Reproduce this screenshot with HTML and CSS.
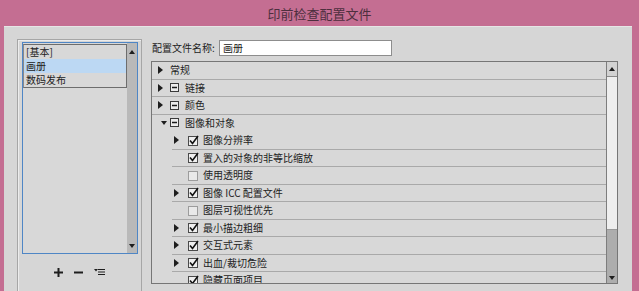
FILE: index.html
```html
<!DOCTYPE html>
<html>
<head>
    <title>印前检查配置文件</title>
    <link rel="stylesheet" href="styles.css">
</head>
<body>
    <div class="titlebar">印前检查配置文件</div>
    <div class="dialog">
        <div class="profiles">
            <div class="listbox">
                <div class="items">
                    <div class="item-list">
                        <div class="item">[基本]</div>
                        <div class="item selected">画册</div>
                        <div class="item">数码发布</div>
                    </div>
                </div>
                <div class="list-scroll">
                    <span class="tri-up"></span>
                    <span class="tri-down"></span>
                </div>
            </div>
            <div class="list-tools">
                <svg class="tool" width="9" height="9" viewBox="0 0 9 9"><path d="M4.5 0V9M0 4.5H9" stroke="#1e1e1e" stroke-width="2"/></svg>
                <svg class="tool" width="9" height="9" viewBox="0 0 9 9"><path d="M0 4.5H9" stroke="#1e1e1e" stroke-width="2"/></svg>
                <svg class="tool" width="11" height="8" viewBox="0 0 11 8"><path d="M0 1H4L2 3.5Z" fill="#1e1e1e"/><path d="M4 1.5H11M4 4H11M4 6.5H11" stroke="#1e1e1e" stroke-width="1.2"/></svg>
            </div>
        </div>

        <div class="main">
            <div class="name-row">
                <label class="name-label">配置文件名称:</label>
                <div class="name-input">画册</div>
            </div>
            <div class="tree">
                <div class="rows">
                    <div class="row">
                        <span class="tw"><span class="arrow-r"></span></span>
                        <span class="label">常规</span>
                    </div>
                    <div class="row">
                        <span class="tw"><span class="arrow-r"></span></span>
                        <svg class="minus" width="9" height="9" viewBox="0 0 9 9"><rect x="0.5" y="0.5" width="8" height="8" fill="#ececec" stroke="#3a3a3a"/><path d="M2 4.5H7" stroke="#1a1a1a" stroke-width="1.5"/></svg>
                        <span class="label">链接</span>
                    </div>
                    <div class="row">
                        <span class="tw"><span class="arrow-r"></span></span>
                        <svg class="minus" width="9" height="9" viewBox="0 0 9 9"><rect x="0.5" y="0.5" width="8" height="8" fill="#ececec" stroke="#3a3a3a"/><path d="M2 4.5H7" stroke="#1a1a1a" stroke-width="1.5"/></svg>
                        <span class="label">颜色</span>
                    </div>
                    <div class="row open">
                        <span class="tw"><span class="arrow-d"></span></span>
                        <svg class="minus" width="9" height="9" viewBox="0 0 9 9"><rect x="0.5" y="0.5" width="8" height="8" fill="#ececec" stroke="#3a3a3a"/><path d="M2 4.5H7" stroke="#1a1a1a" stroke-width="1.5"/></svg>
                        <span class="label">图像和对象</span>
                    </div>
                    <div class="row child">
                        <span class="tw"><span class="arrow-r"></span></span>
                        <svg class="check" width="11" height="11" viewBox="0 0 11 11"><rect x="0.5" y="1.5" width="9" height="9" fill="#efefef" stroke="#4a4a4a"/><path d="M2 5.5L4.5 8.5L10 1" fill="none" stroke="#111" stroke-width="1.6"/></svg>
                        <span class="label">图像分辨率</span>
                    </div>
                    <div class="row child">
                        <span class="tw"></span>
                        <svg class="check" width="11" height="11" viewBox="0 0 11 11"><rect x="0.5" y="1.5" width="9" height="9" fill="#efefef" stroke="#4a4a4a"/><path d="M2 5.5L4.5 8.5L10 1" fill="none" stroke="#111" stroke-width="1.6"/></svg>
                        <span class="label">置入的对象的非等比缩放</span>
                    </div>
                    <div class="row child">
                        <span class="tw"></span>
                        <svg class="check" width="11" height="11" viewBox="0 0 11 11"><rect x="0.5" y="1.5" width="9" height="9" fill="#e9e9e9" stroke="#9c9c9c"/></svg>
                        <span class="label">使用透明度</span>
                    </div>
                    <div class="row child">
                        <span class="tw"><span class="arrow-r"></span></span>
                        <svg class="check" width="11" height="11" viewBox="0 0 11 11"><rect x="0.5" y="1.5" width="9" height="9" fill="#efefef" stroke="#4a4a4a"/><path d="M2 5.5L4.5 8.5L10 1" fill="none" stroke="#111" stroke-width="1.6"/></svg>
                        <span class="label">图像 ICC 配置文件</span>
                    </div>
                    <div class="row child">
                        <span class="tw"></span>
                        <svg class="check" width="11" height="11" viewBox="0 0 11 11"><rect x="0.5" y="1.5" width="9" height="9" fill="#e9e9e9" stroke="#9c9c9c"/></svg>
                        <span class="label">图层可视性优先</span>
                    </div>
                    <div class="row child">
                        <span class="tw"><span class="arrow-r"></span></span>
                        <svg class="check" width="11" height="11" viewBox="0 0 11 11"><rect x="0.5" y="1.5" width="9" height="9" fill="#efefef" stroke="#4a4a4a"/><path d="M2 5.5L4.5 8.5L10 1" fill="none" stroke="#111" stroke-width="1.6"/></svg>
                        <span class="label">最小描边粗细</span>
                    </div>
                    <div class="row child">
                        <span class="tw"><span class="arrow-r"></span></span>
                        <svg class="check" width="11" height="11" viewBox="0 0 11 11"><rect x="0.5" y="1.5" width="9" height="9" fill="#efefef" stroke="#4a4a4a"/><path d="M2 5.5L4.5 8.5L10 1" fill="none" stroke="#111" stroke-width="1.6"/></svg>
                        <span class="label">交互式元素</span>
                    </div>
                    <div class="row child">
                        <span class="tw"><span class="arrow-r"></span></span>
                        <svg class="check" width="11" height="11" viewBox="0 0 11 11"><rect x="0.5" y="1.5" width="9" height="9" fill="#efefef" stroke="#4a4a4a"/><path d="M2 5.5L4.5 8.5L10 1" fill="none" stroke="#111" stroke-width="1.6"/></svg>
                        <span class="label">出血/裁切危险</span>
                    </div>
                    <div class="row child">
                        <span class="tw"></span>
                        <svg class="check" width="11" height="11" viewBox="0 0 11 11"><rect x="0.5" y="1.5" width="9" height="9" fill="#efefef" stroke="#4a4a4a"/><path d="M2 5.5L4.5 8.5L10 1" fill="none" stroke="#111" stroke-width="1.6"/></svg>
                        <span class="label">隐藏页面项目</span>
                    </div>
                </div>
                <div class="vscroll">
                    <div class="sb-up"><span class="tri-up"></span></div>
                    <div class="sb-thumb"></div>
                    <div class="sb-track"><span class="tri-down"></span></div>
                </div>
            </div>
        </div>
    </div>
</body>
</html>
```

FILE: styles.css
```css
body {
    margin: 0;
    height: 291px;
    overflow: hidden;
    background-color: #c46e92;
    font-family: "Noto Sans CJK SC", "Noto Sans", sans-serif;
    font-size: 10px;
    color: #222;
}

.titlebar {
    height: 26px;
    display: flex;
    align-items: center;
    justify-content: center;
    color: #4d2f3e;
    font-size: 13px;
}

.dialog {
    margin: 0 7px 0 4px;
    height: 265px;
    box-sizing: border-box;
    background-color: #d6d6d6;
    border-top: 1px solid #e6e6e6;
    padding: 12px 14px 0 13px;
    display: flex;
    gap: 9px;
    overflow: hidden;
}

/* Left: profile list group */
.profiles {
    width: 125px;
    height: 270px;
    flex-shrink: 0;
    box-sizing: border-box;
    border: 1px solid #a6a6a6;
    box-shadow: inset 1px 1px 0 #ececec;
    padding: 2px 3px 0 4px;
}

.listbox {
    height: 212px;
    box-sizing: border-box;
    border: 1px solid #4f86c5;
    background-color: #d8d8d8;
    display: flex;
}

.items {
    flex: 1;
}

.item-list {
    margin-top: 1px;
    border: 1px solid #6d6d6d;
    border-left-color: #8a8a8a;
}

.item {
    height: 14px;
    line-height: 14px;
    padding-left: 2px;
    white-space: nowrap;
}

.item.selected {
    background-color: #bcd8f3;
}

.list-scroll {
    width: 10px;
    background-color: #b9b9b9;
    display: flex;
    flex-direction: column;
    justify-content: space-between;
    align-items: center;
    padding: 7px 0 5px;
}

.tri-up {
    width: 0;
    height: 0;
    border-left: 3px solid transparent;
    border-right: 3px solid transparent;
    border-bottom: 4px solid #1e1e1e;
}

.tri-down {
    width: 0;
    height: 0;
    border-left: 3px solid transparent;
    border-right: 3px solid transparent;
    border-top: 4px solid #1e1e1e;
}

.list-tools {
    height: 36px;
    display: flex;
    align-items: center;
    padding-left: 32px;
}

.tool + .tool {
    margin-left: 11px;
}

/* Right: name + check tree */
.main {
    flex: 1;
    display: flex;
    flex-direction: column;
}

.name-row {
    height: 22px;
    display: flex;
    align-items: flex-start;
}

.name-label {
    width: 67px;
    margin: 1px 0 0 1px;
    line-height: 16px;
    white-space: nowrap;
}

.name-input {
    width: 173px;
    height: 16px;
    margin-top: 1px;
    box-sizing: border-box;
    border: 1px solid #8d8d8d;
    background-color: #fff;
    padding-left: 3px;
    line-height: 14px;
}

.tree {
    height: 223px;
    box-sizing: border-box;
    border: 1px solid #767676;
    background-color: #d8d8d8;
    display: flex;
}

.rows {
    flex: 1;
    overflow: hidden;
}

.row {
    height: 17.5px;
    box-sizing: border-box;
    border-bottom: 1px solid #a9a9a9;
    display: flex;
    align-items: center;
    padding-left: 6px;
    white-space: nowrap;
}

.row.open {
    border-bottom-color: transparent;
}

.row.child {
    margin-left: 20px;
    padding-left: 2px;
}

.tw {
    width: 12px;
    flex-shrink: 0;
    display: flex;
    align-items: center;
}

.child .tw {
    width: 14px;
}

.arrow-r {
    width: 0;
    height: 0;
    border-top: 4px solid transparent;
    border-bottom: 4px solid transparent;
    border-left: 5px solid #1e1e1e;
}

.arrow-d {
    width: 0;
    height: 0;
    margin-left: 3px;
    border-left: 3px solid transparent;
    border-right: 3px solid transparent;
    border-top: 4px solid #1e1e1e;
}

.minus {
    margin-right: 6px;
    flex-shrink: 0;
}

.check {
    margin-right: 4px;
    flex-shrink: 0;
}

.label {
    line-height: 16px;
}

.vscroll {
    width: 10px;
    border-left: 1px solid #7d7d7d;
    display: flex;
    flex-direction: column;
}

.sb-up {
    height: 15px;
    box-sizing: border-box;
    background-color: #d2d2d2;
    border-bottom: 1px solid #888;
    display: flex;
    align-items: center;
    justify-content: center;
}

.sb-thumb {
    height: 153px;
    box-sizing: border-box;
    background-color: #eeeeee;
    border-bottom: 1px solid #999;
}

.sb-track {
    flex: 1;
    background-color: #adadad;
    display: flex;
    align-items: flex-end;
    justify-content: center;
    padding-bottom: 3px;
}
```
